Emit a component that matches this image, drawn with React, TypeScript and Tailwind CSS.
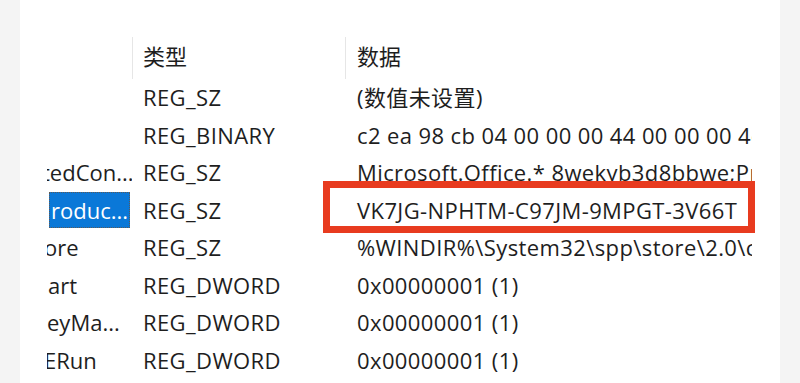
import React from "react";

type Row = {
  name?: string;
  nameClass?: string;
  selected?: boolean;
  type: string;
  data: string;
};

const rows: Row[] = [
  { type: "REG_SZ", data: "(数值未设置)" },
  { type: "REG_BINARY", data: "c2 ea 98 cb 04 00 00 00 44 00 00 00 4c 00 00 00" },
  { name: "tedCon...", nameClass: "ml-[-5px]", type: "REG_SZ", data: "Microsoft.Office.* 8wekyb3d8bbwe;Pro" },
  { name: "roduc...", nameClass: "ml-[1px]", selected: true, type: "REG_SZ", data: "VK7JG-NPHTM-C97JM-9MPGT-3V66T" },
  { name: "ore", nameClass: "ml-[-3px]", type: "REG_SZ", data: "%WINDIR%\\System32\\spp\\store\\2.0\\cache" },
  { name: "art", nameClass: "ml-[1px]", type: "REG_DWORD", data: "0x00000001 (1)" },
  { name: "eyMa...", nameClass: "ml-[0px]", type: "REG_DWORD", data: "0x00000001 (1)" },
  { name: "ERun", nameClass: "ml-[-3px]", type: "REG_DWORD", data: "0x00000001 (1)" },
];

const font = { fontFamily: '"Open Sans", "Noto Sans CJK SC", sans-serif' };

const App = () => {
  return (
    <div className="flex w-[800px] h-[383px] overflow-hidden bg-white text-[22px] text-[#1e1e1e]" style={font}>
      <div className="w-[20px] h-full bg-[#f4f4f4]" />
      <div className="relative flex-1 h-full bg-white pt-[37px] pl-[27px]">
        {/* header */}
        <div className="flex h-[42px]">
          <div className="w-[85px]" />
          <div className="w-[213px] border-l border-[#e6e6e6] pl-[10px] leading-[38px]">类型</div>
          <div className="w-[407px] border-l border-[#e6e6e6] pl-[11px] leading-[38px]">数据</div>
        </div>
        {rows.map((r, i) => (
          <div key={i} className="flex h-[37.5px] leading-[37.5px]">
            <div className="w-[85px] overflow-hidden whitespace-nowrap">
              {r.selected ? (
                <div className="ml-[2px] mt-[0.5px] h-[36px] w-[81px] bg-[#0a78d8] border border-dotted border-[#5a5a5a] text-white leading-[34px] overflow-hidden whitespace-nowrap">
                  <span className={r.nameClass}>{r.name}</span>
                </div>
              ) : (
                <div className={r.nameClass}>{r.name}</div>
              )}
            </div>
            <div className="w-[213px] pl-[11px] whitespace-nowrap tracking-[0.4px]">{r.type}</div>
            <div className="w-[407px] pl-[12px] whitespace-nowrap overflow-hidden tracking-[0.4px]">{r.data}</div>
          </div>
        ))}
        {/* red highlight box */}
        <div className="absolute left-[303px] top-[181px] w-[432px] h-[52px] border-[7px] border-[#e83b1f]" />
      </div>
      <div className="w-[20px] h-full bg-[#f4f4f4]" />
    </div>
  );
};

export default App;
